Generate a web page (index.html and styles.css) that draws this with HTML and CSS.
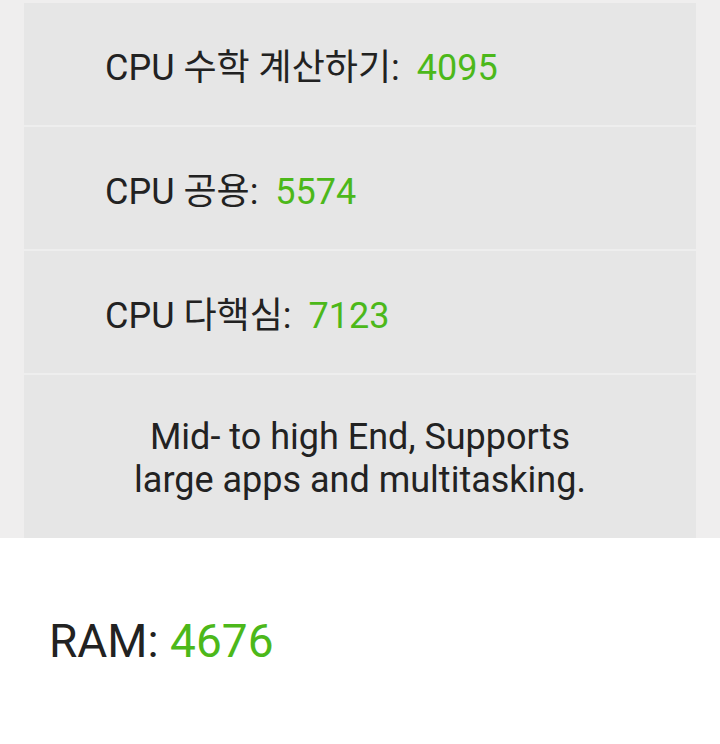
FILE: index.html
```html
<!DOCTYPE html>
<html lang="ko">
<head>
  <meta charset="UTF-8">
  <title>CPU 점수</title>
  <link rel="stylesheet" href="styles.css">
</head>
<body>

  <!-- PANEL DE PUNTUACIONES -->
  <div class="marco">
    <div class="panel">
      <div class="fila">
        <p><span class="etiqueta">CPU 수학 계산하기:</span> <span class="valor">4095</span></p>
      </div>
      <div class="fila">
        <p><span class="etiqueta">CPU 공용:</span> <span class="valor">5574</span></p>
      </div>
      <div class="fila">
        <p><span class="etiqueta">CPU 다핵심:</span> <span class="valor">7123</span></p>
      </div>
      <div class="fila fila-texto">
        <p>Mid- to high End, Supports<br>large apps and multitasking.</p>
      </div>
    </div>
  </div>

  <!-- RAM -->
  <div class="ram">
    <span class="etiqueta">RAM:</span>
    <span class="valor">4676</span>
  </div>

</body>
</html>
```

FILE: styles.css
```css
body {
  margin: 0;
  font-family: Roboto, "Noto Sans CJK KR", sans-serif;
  color: #222222;
  background-color: #ffffff;
}
.marco {
  background-color: #efeeee;
  padding: 3px 24px 0;
}
.panel {
  background-color: #e6e6e6;
}
.fila {
  height: 122px;
  display: flex;
  align-items: center;
  padding-left: 81px;
  border-bottom: 2px solid #eeeeee;
  font-size: 36px;
}
.fila:last-child {
  border-bottom: none;
}
.fila p {
  margin: 0;
}
.valor {
  color: #4cb81a;
}
.fila .valor {
  margin-left: 8px;
}
.fila-texto {
  height: 163px;
  padding-left: 0;
  justify-content: center;
  text-align: center;
}
.fila-texto p {
  line-height: 43px;
  padding-top: 4px;
}
.ram {
  padding: 76px 0 0 49px;
  font-size: 46px;
}
```
